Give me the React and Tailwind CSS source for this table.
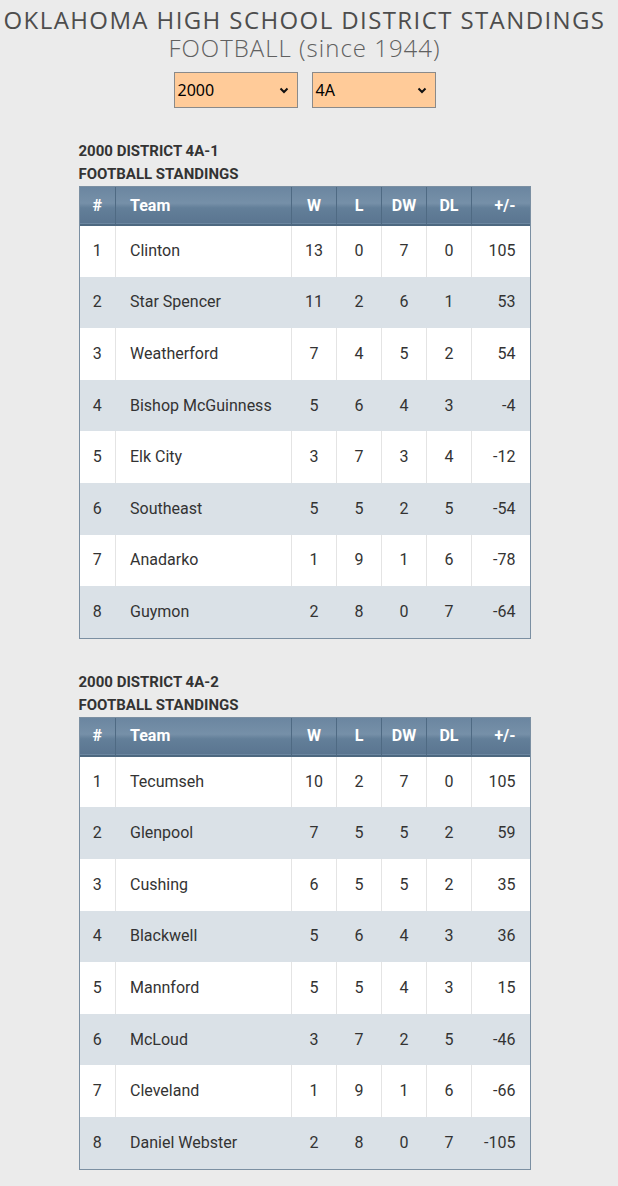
import React from "react";

const district1 = [
  [1, "Clinton", 13, 0, 7, 0, 105],
  [2, "Star Spencer", 11, 2, 6, 1, 53],
  [3, "Weatherford", 7, 4, 5, 2, 54],
  [4, "Bishop McGuinness", 5, 6, 4, 3, -4],
  [5, "Elk City", 3, 7, 3, 4, -12],
  [6, "Southeast", 5, 5, 2, 5, -54],
  [7, "Anadarko", 1, 9, 1, 6, -78],
  [8, "Guymon", 2, 8, 0, 7, -64],
];

const district2 = [
  [1, "Tecumseh", 10, 2, 7, 0, 105],
  [2, "Glenpool", 7, 5, 5, 2, 59],
  [3, "Cushing", 6, 5, 5, 2, 35],
  [4, "Blackwell", 5, 6, 4, 3, 36],
  [5, "Mannford", 5, 5, 4, 3, 15],
  [6, "McLoud", 3, 7, 2, 5, -46],
  [7, "Cleveland", 1, 9, 1, 6, -66],
  [8, "Daniel Webster", 2, 8, 0, 7, -105],
];

const Standings = ({ title, rows }) => {
  return (
    <section className="w-[452px] mx-auto">
      <h2 className="font-['Roboto',sans-serif] font-bold text-[15px] leading-[23px] text-[#333] uppercase">
        {title}
        <br />
        Football Standings
      </h2>
      <div className="border border-[#7b8fa2]">
        <table className="table-fixed w-[450px] border-collapse font-['Roboto',sans-serif] text-[16px] text-[#333]">
          <colgroup>
            <col className="w-[36px]" />
            <col className="w-[176px]" />
            <col className="w-[45px]" />
            <col className="w-[45px]" />
            <col className="w-[45px]" />
            <col className="w-[45px]" />
            <col className="w-[58px]" />
          </colgroup>
          <thead>
            <tr className="h-[38px] bg-[linear-gradient(to_bottom,#6b86a0_0%,#7690a8_45%,#637f99_58%,#5a7590_100%)] text-white font-bold border-b-2 border-[#4d6880] [&>th]:border-x [&>th]:border-[#4f6a83] [&>th:first-child]:border-l-0 [&>th:last-child]:border-r-0">
              <th className="text-center">#</th>
              <th className="text-left pl-[14px]">Team</th>
              <th className="text-center">W</th>
              <th className="text-center">L</th>
              <th className="text-center">DW</th>
              <th className="text-center">DL</th>
              <th className="text-right pr-[14px]">+/-</th>
            </tr>
          </thead>
          <tbody>
            {rows.map((r, i) => (
              <tr
                key={r[0]}
                className={`h-[51.6px] [&>td]:border-x [&>td:first-child]:border-l-0 [&>td:last-child]:border-r-0 ${i % 2 === 0 ? "bg-white [&>td]:border-[#e4e4e4]" : "bg-[#dae1e7] [&>td]:border-[#dae1e7]"}`}
              >
                <td className="text-center">{r[0]}</td>
                <td className="text-left pl-[14px]">{r[1]}</td>
                <td className="text-center">{r[2]}</td>
                <td className="text-center">{r[3]}</td>
                <td className="text-center">{r[4]}</td>
                <td className="text-center">{r[5]}</td>
                <td className="text-right pr-[14px]">{r[6]}</td>
              </tr>
            ))}
          </tbody>
        </table>
      </div>
    </section>
  );
};

const Select = ({ value }) => {
  return (
    <div className="w-[124px] h-[36px] bg-[#ffcb99] border border-[#8a8a8a] flex items-center justify-between pl-[3px] pr-[8px] font-['Noto_Sans',sans-serif] text-[16px] text-black">
      <span>{value}</span>
      <svg width="10" height="7" viewBox="0 0 10 7">
        <path d="M1.5 1.5 L5 5 L8.5 1.5" fill="none" stroke="#111" strokeWidth="2" />
      </svg>
    </div>
  );
};

export default function App() {
  return (
    <div className="min-h-[1186px] bg-[#ebebeb] pb-[16px]">
      <div className="w-[609px]">
        <header className="text-center font-['Open_Sans',sans-serif] text-[#4d4d4d] pt-[6px]">
          <h1 className="text-[24px] leading-[28px] font-medium tracking-[1.4px] whitespace-nowrap">
            OKLAHOMA HIGH SCHOOL DISTRICT STANDINGS
          </h1>
          <p className="text-[24px] leading-[28px] font-light tracking-[1px] text-[#606060]">FOOTBALL (since 1944)</p>
        </header>
        <div className="flex justify-center gap-[14px] mt-[10px]">
          <Select value="2000" />
          <Select value="4A" />
        </div>
        <div className="mt-[32px]">
          <Standings title="2000 District 4A-1" rows={district1} />
        </div>
        <div className="mt-[32px]">
          <Standings title="2000 District 4A-2" rows={district2} />
        </div>
      </div>
    </div>
  );
}
